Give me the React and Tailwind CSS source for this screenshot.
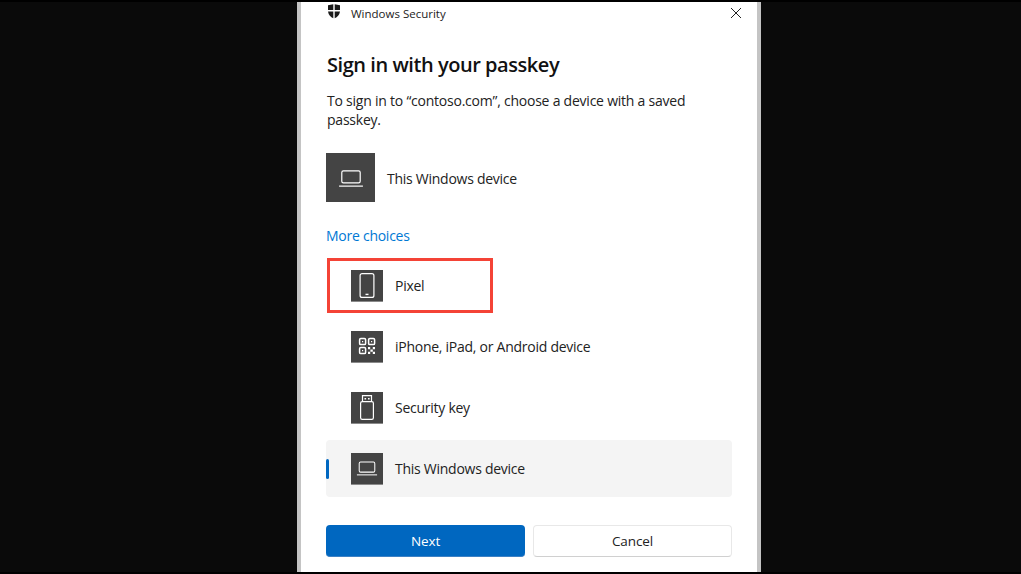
const font = { fontFamily: '"Open Sans", "Noto Sans", sans-serif' };

function Laptop({ size = 24 }) {
  return (
    <svg width={size} height={size} viewBox="0 0 24 24" fill="none" stroke="#fff" strokeWidth="1.1">
      <rect x="3.5" y="5.5" width="17" height="11" rx="1.5" />
      <path d="M1 19.5h22" />
    </svg>
  );
}
function Phone() {
  return (
    <svg width="32" height="32" viewBox="0 0 32 32" fill="none" stroke="#fff" strokeWidth="1.2">
      <rect x="9.1" y="4.6" width="13.8" height="23.8" rx="2" />
      <path d="M14.5 25.4h3" strokeWidth="1.4" />
    </svg>
  );
}
function Qr() {
  return (
    <svg width="32" height="32" viewBox="0 0 32 32" fill="none" stroke="#fff" strokeWidth="1.5">
      <rect x="8.6" y="8.6" width="6" height="6" rx="1.2" />
      <rect x="17.6" y="8.6" width="6" height="6" rx="1.2" />
      <rect x="8.6" y="17.6" width="6" height="6" rx="1.2" />
      <path d="M11 11.6h1.2M20 11.6h1.2M11 20.6h1.2" strokeWidth="1.2" />
      <path d="M17 17h2.2v2.2H17zM21.8 17H24v2.2h-2.2zM19.4 19.4h2.4v2.4h-2.4zM17 21.8h2.2V24H17zM21.8 21.8H24V24h-2.2z" fill="#fff" stroke="none" />
    </svg>
  );
}
function Usb() {
  return (
    <svg width="32" height="32" viewBox="0 0 32 32" fill="none" stroke="#fff" strokeWidth="1.2">
      <path d="M11.5 10.5V4.6h9v5.9" />
      <rect x="9.6" y="10.6" width="12.8" height="17.8" rx="1.6" />
      <path d="M13.5 7h1.6v1.4h-1.6zM17 7h1.6v1.4H17z" fill="#fff" stroke="none" />
    </svg>
  );
}
function Shield() {
  return (
    <svg width="14" height="15" viewBox="0 0 14 15" fill="#1a1a1a">
      <path d="M1 1.2 6.3.2v5.9H1zM7.7.2 13 1.2v4.9H7.7zM1 7.5h5.3v6.7C3.6 13.2 1.6 11 1 7.5zM7.7 7.5H13c-.6 3.5-2.6 5.7-5.3 6.7z" />
    </svg>
  );
}

function Row({ icon, label, selected, outlined }) {
  return (
    <div className={`relative flex items-center rounded-[4px] h-[57px] ${selected ? "bg-[#f4f4f4]" : ""}`}>
      {selected && <span className="absolute left-0 top-[19px] w-[3px] h-[20px] rounded-[2px] bg-[#0067c0]" />}
      {outlined && <span className="absolute left-[1px] top-[1px] w-[166px] h-[55px] border-[3px] border-[#f44336]" />}
      <span className="ml-[25px] w-[32px] h-[32px] bg-[#444444] border-b border-[#8a8a8a] flex items-center justify-center shrink-0">{icon}</span>
      <span className="ml-[12px] text-[14px] text-[#222222] tracking-[-0.26px]">{label}</span>
    </div>
  );
}

export default function App() {
  return (
    <div className="w-[1021px] h-[574px] bg-black overflow-hidden py-[2px]" style={font}>
      <div className="h-[570px] bg-[#0a0a0a]">
        <div className="ml-[297px] w-[464px] h-[570px] bg-white border-x-[4px] border-[#c4c4c4] px-[25px] flex flex-col">
          <div className="flex items-center h-[24px] relative">
            <span className="absolute left-[1px] top-[2px] flex"><Shield /></span>
            <span className="ml-[25px] text-[11.5px] text-[#222222]">Windows Security</span>
            <svg className="absolute right-[-9px] top-[6px]" width="10" height="10" viewBox="0 0 10 10" stroke="#222" strokeWidth="1" fill="none">
              <path d="M0 0l10 10M10 0 0 10" />
            </svg>
          </div>
          <h1 className="mt-[25px] pl-[1px] text-[20px] leading-[28px] font-semibold text-[#111111] tracking-[-0.45px]">Sign in with your passkey</h1>
          <p className="mt-[12px] pl-[1px] text-[14px] leading-[19px] text-[#222222] w-[385px] tracking-[-0.23px]">To sign in to “contoso.com”, choose a device with a saved passkey.</p>
          <div className="mt-[24px] flex items-center h-[49px]">
            <span className="w-[49px] h-[49px] bg-[#444444] flex items-center justify-center"><Laptop size={26} /></span>
            <span className="ml-[12px] pt-[2px] text-[14px] text-[#222222] tracking-[-0.26px]">This Windows device</span>
          </div>
          <a className="mt-[24px] text-[14px] leading-[20px] text-[#0078d4] tracking-[-0.26px]">More choices</a>
          <div className="mt-[11px] flex flex-col gap-[4px] w-[406px]">
            <Row icon={<Phone />} label="Pixel" outlined />
            <Row icon={<Qr />} label="iPhone, iPad, or Android device" />
            <Row icon={<Usb />} label="Security key" />
            <Row icon={<Laptop size={22} />} label="This Windows device" selected />
          </div>
          <div className="mt-[28px] flex gap-[8px] w-[406px]">
            <button className="w-[199px] h-[32px] pt-[1px] rounded-[4px] bg-[#0067c0] text-white text-[13.5px] tracking-[-0.1px] border-b border-[#3c80c4]">Next</button>
            <button className="w-[199px] h-[32px] rounded-[4px] bg-white text-[#222222] text-[13.5px] tracking-[-0.1px] border border-[#e8e8e8] border-b-[#d0d0d0]">Cancel</button>
          </div>
        </div>
      </div>
    </div>
  );
}
